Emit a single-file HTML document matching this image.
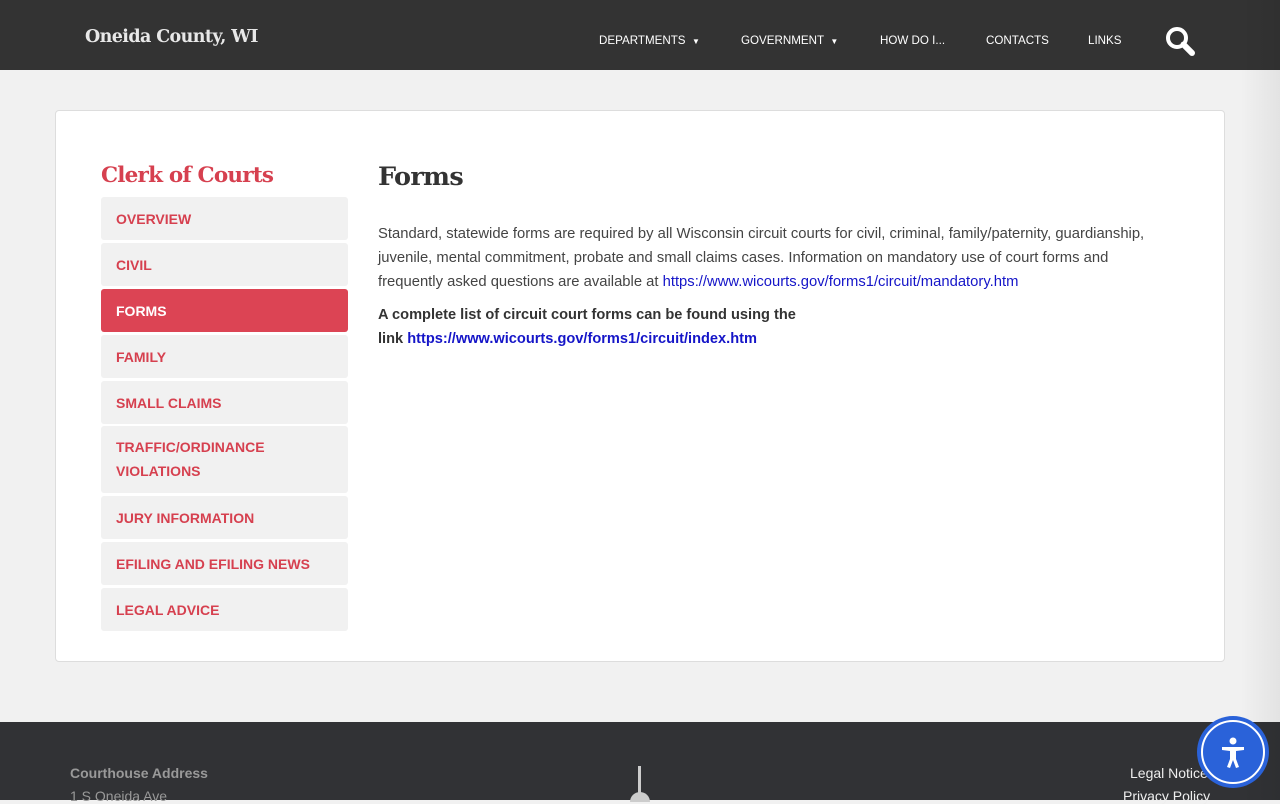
<!DOCTYPE html>
<html><head><style>
*{margin:0;padding:0;box-sizing:border-box}
body{width:1280px;height:800px;overflow:hidden;background:#f1f1f1;font-family:"Liberation Sans",sans-serif;position:relative}
.hdr{position:absolute;top:0;left:0;width:1280px;height:70px;background:#333}
.logo{position:absolute;left:85px;top:27px;font-family:"DejaVu Serif","Liberation Serif",serif;font-weight:bold;font-size:17.5px;color:#e8e8e8;letter-spacing:-0.6px}
.nav{position:absolute;top:34px;font-size:11.6px;color:#fff}
.nav small{font-size:8px}
.card{position:absolute;left:55px;top:110px;width:1170px;height:552px;background:#fff;border:1px solid #ddd;border-radius:4px}
.st{position:absolute;left:101px;top:163px;font-family:"DejaVu Serif","Liberation Serif",serif;font-weight:bold;font-size:21.5px;color:#d6404f;letter-spacing:-0.8px}
.it{position:absolute;left:101px;width:247px;background:#f1f1f1;border-radius:3px;color:#d6404f;font-weight:bold;font-size:14px;padding-left:15px;line-height:24px}
.it.a{background:#dc4454;color:#fff}
h1{position:absolute;left:378px;top:162px;font-family:"DejaVu Serif","Liberation Serif",serif;font-weight:bold;font-size:25.5px;color:#333;letter-spacing:-0.7px}
.p{position:absolute;left:378px;width:775px;font-size:14.8px;line-height:24px;color:#444}
a{color:#1515c8;text-decoration:none}
.ft{position:absolute;top:722px;left:0;width:1280px;height:78px;background:#313235}
.shade{position:absolute;top:0;right:0;width:40px;height:800px;background:linear-gradient(to right,rgba(0,0,0,0),rgba(0,0,0,0.06))}
</style></head><body>
<div class="hdr">
<div class="logo">Oneida County, WI</div>
<div class="nav" style="left:599px">DEPARTMENTS &nbsp;<small>▼</small></div>
<div class="nav" style="left:741px">GOVERNMENT &nbsp;<small>▼</small></div>
<div class="nav" style="left:880px">HOW DO I...</div>
<div class="nav" style="left:986px">CONTACTS</div>
<div class="nav" style="left:1088px">LINKS</div>
<svg style="position:absolute;left:1164px;top:25px" width="32" height="32" viewBox="0 0 32 32"><circle cx="13" cy="13" r="9" fill="none" stroke="#fff" stroke-width="4"/><line x1="19.5" y1="19.5" x2="28" y2="28" stroke="#fff" stroke-width="6" stroke-linecap="round"/></svg>
</div>
<div class="card"></div>
<div class="st">Clerk of Courts</div>
<div class="it" style="top:197px;height:43px;padding-top:10px">OVERVIEW</div>
<div class="it" style="top:243px;height:43px;padding-top:10px">CIVIL</div>
<div class="it a" style="top:289px;height:43px;padding-top:10px">FORMS</div>
<div class="it" style="top:335px;height:43px;padding-top:10px">FAMILY</div>
<div class="it" style="top:381px;height:43px;padding-top:10px">SMALL CLAIMS</div>
<div class="it" style="top:426px;height:67px;padding-top:9px">TRAFFIC/ORDINANCE<br>VIOLATIONS</div>
<div class="it" style="top:496px;height:43px;padding-top:10px">JURY INFORMATION</div>
<div class="it" style="top:542px;height:43px;padding-top:10px">EFILING AND EFILING NEWS</div>
<div class="it" style="top:588px;height:43px;padding-top:10px">LEGAL ADVICE</div>
<h1>Forms</h1>
<div class="p" style="top:222px">Standard, statewide forms are required by all Wisconsin circuit courts for civil, criminal, family/paternity, guardianship, juvenile, mental commitment, probate and small claims cases. Information on mandatory use of court forms and frequently asked questions are available at <a>https://www.wicourts.gov/forms1/circuit/mandatory.htm</a></div>
<div class="p" style="top:303px;width:440px;font-size:14.6px;font-weight:bold;color:#333">A complete list of circuit court forms can be found using the link <a>https://www.wicourts.gov/forms1/circuit/index.htm</a></div>
<div class="ft">
<div style="position:absolute;left:70px;top:43px;font-size:14px;font-weight:bold;color:#999">Courthouse Address</div>
<div style="position:absolute;left:70px;top:66px;font-size:14px;color:#999">1 S Oneida Ave</div>
<div style="position:absolute;left:638px;top:44px;width:3px;height:30px;background:#ccc"></div>
<div style="position:absolute;left:630px;top:70px;width:20px;height:10px;background:#ccc;border-radius:10px 10px 0 0"></div>
<div style="position:absolute;left:1130px;top:43px;font-size:14px;color:#eee">Legal Notice</div>
<div style="position:absolute;left:1123px;top:66px;font-size:14px;color:#eee">Privacy Policy</div>
</div>
<div class="shade"></div>
<div style="position:absolute;left:1197px;top:716px;width:72px;height:72px;border-radius:50%;background:#2a62d9"></div>
<div style="position:absolute;left:1201px;top:720px;width:64px;height:64px;border-radius:50%;border:2px solid #fff"></div>
<svg style="position:absolute;left:1213px;top:732px" width="40" height="40" viewBox="0 0 40 40"><circle cx="20" cy="9" r="3.5" fill="#fff"/><path d="M9 15 L31 15 L31 18 L23 19 L23 27 L26 35 L23 36 L20 28 L17 36 L14 35 L17 27 L17 19 L9 18Z" fill="#fff"/></svg>
</body></html>
